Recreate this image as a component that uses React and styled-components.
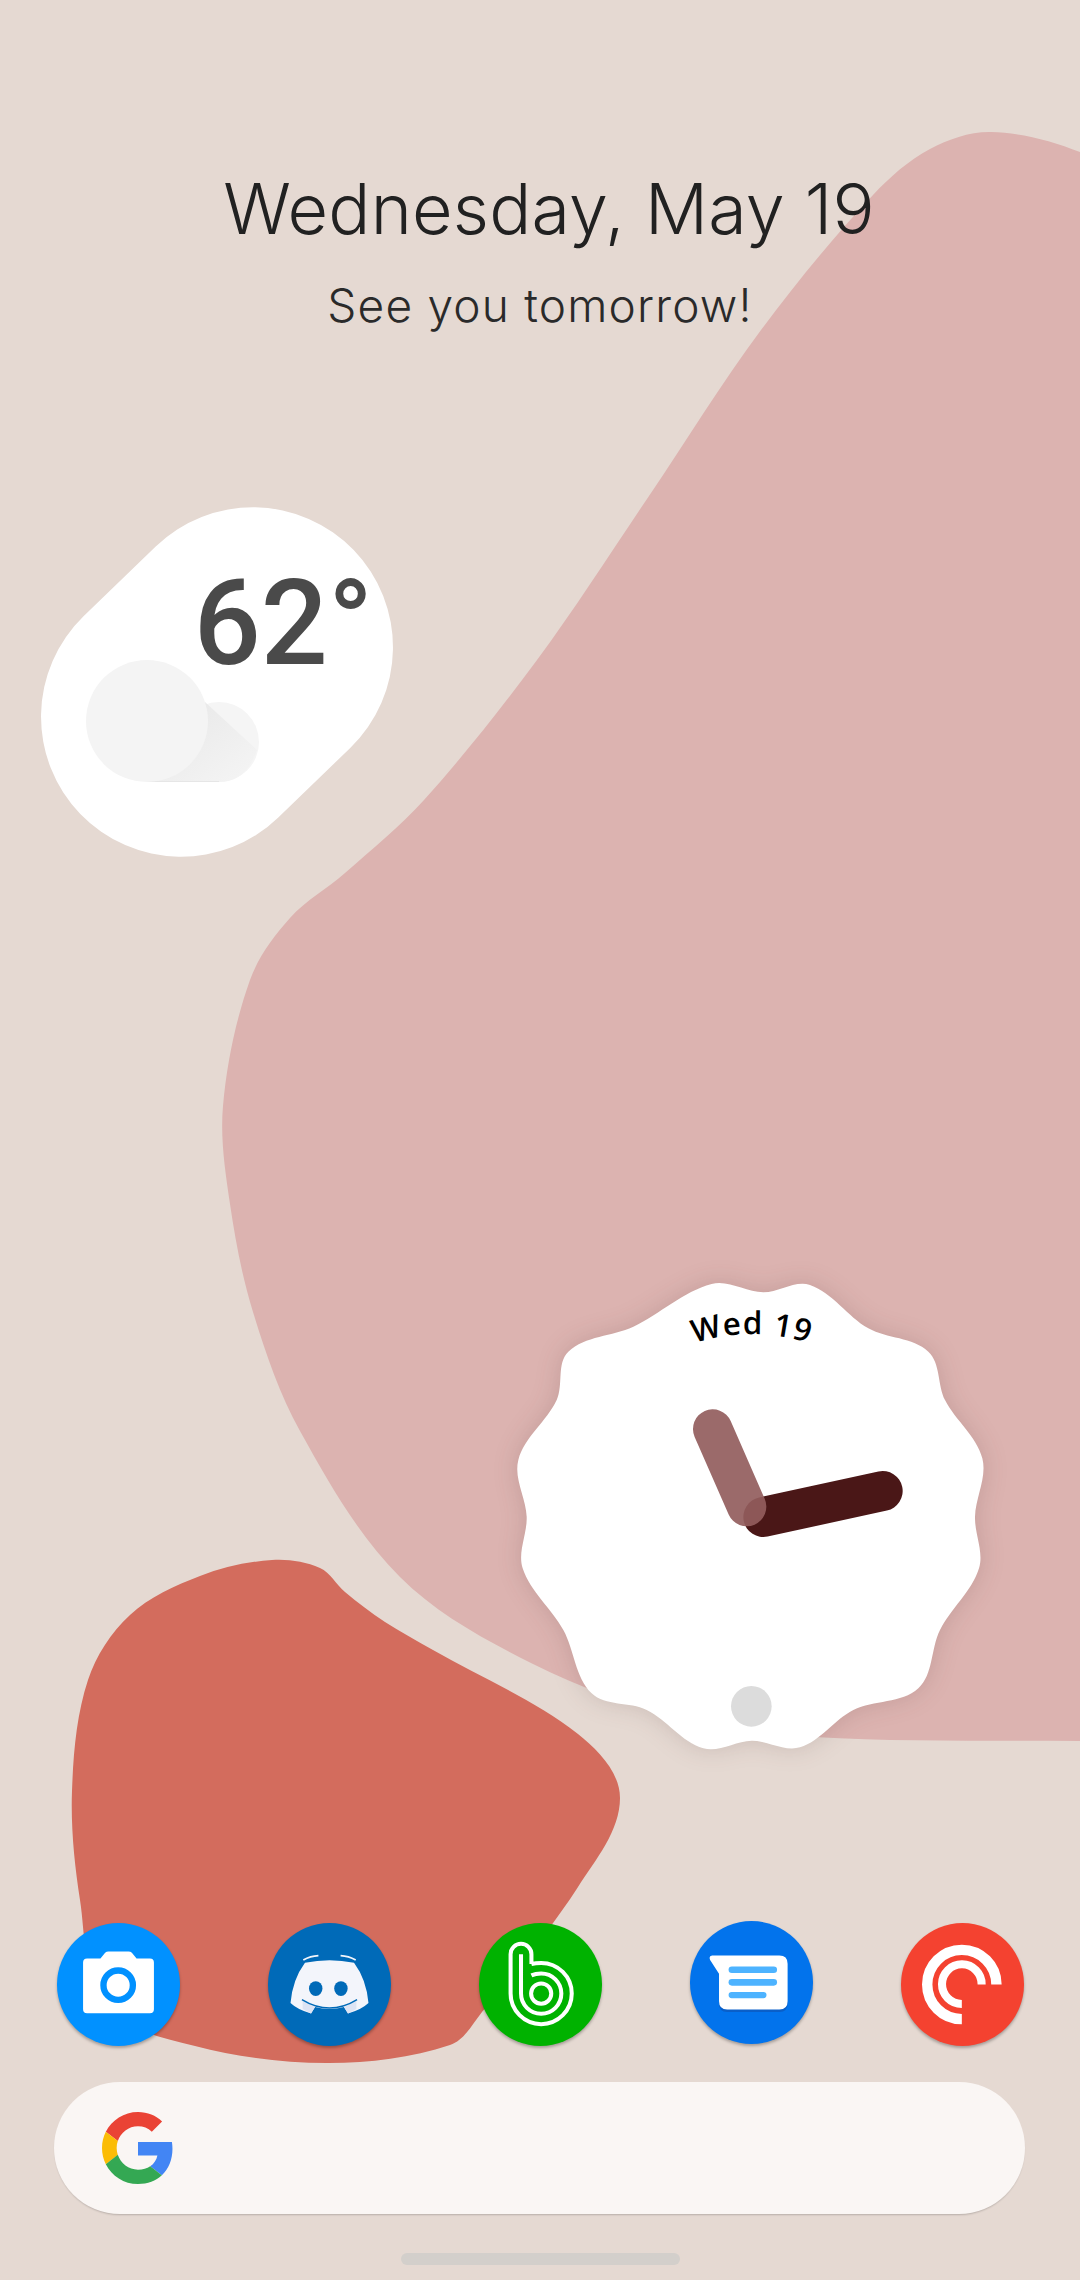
import React from 'react';
import styled, { createGlobalStyle } from 'styled-components';

const GlobalStyle = createGlobalStyle`
    html, body {
        margin: 0;
        padding: 0;
        background: #e5d9d2;
    }
`;

const Screen = styled.div`
    position: relative;
    overflow: hidden;
    display: flex;
    flex-direction: column;
    width: 1080px;
    height: 2280px;
    background: #e5d9d2;
    font-family: Inter, "Noto Sans", sans-serif;
`;

const Wallpaper = styled.svg`
    position: absolute;
    top: 0;
    left: 0;
    width: 1080px;
    height: 2280px;
`;

const Content = styled.div`
    position: relative;
    flex: 1;
    display: flex;
    flex-direction: column;
`;

const Header = styled.header`
    display: flex;
    flex-direction: column;
    align-items: center;
    height: 507px;
    padding-top: 167px;
    box-sizing: border-box;
    color: #212121;
`;

const DateLine = styled.h1`
    margin: 0;
    padding-left: 18px;
    font-size: 70px;
    font-weight: 350;
    letter-spacing: 0.2px;
    line-height: 84px;
`;

const Greeting = styled.p`
    margin: 26px 0 0;
    font-size: 46px;
    font-weight: 350;
    letter-spacing: 1.2px;
    line-height: 56px;
    color: #2a2a2a;
`;

const Weather = styled.section`
    position: relative;
    width: 352px;
    height: 350px;
    margin-left: 41px;

    &::before {
        content: '';
        position: absolute;
        top: 35px;
        left: -14px;
        width: 380px;
        height: 280px;
        border-radius: 140px;
        background: #fff;
        transform: rotate(-44deg);
    }
`;

const Temp = styled.div`
    position: relative;
    height: 153px;
    padding: 57px 20px 0 0;
    box-sizing: border-box;
    text-align: right;
    font-family: Roboto, sans-serif;
    font-size: 118px;
    font-weight: 500;
    line-height: 120px;
    color: #4a4a4a;
`;

const Cloud = styled.svg`
    position: relative;
    display: block;
    width: 174px;
    height: 122px;
    margin-left: 45px;
`;

const Clock = styled.svg`
    display: block;
    align-self: flex-end;
    width: 500px;
    height: 500px;
    margin: 403px 80px 0 0;
    overflow: visible;
`;

const ClockFace = styled.path`
    fill: #fff;
    filter: drop-shadow(0 0 36px rgba(70, 40, 40, 0.16));
`;

const ClockDate = styled.text`
    font-family: "Open Sans", sans-serif;
    font-size: 94px;
    font-weight: 600;
    letter-spacing: 3px;
    fill: #000;
`;

const Dock = styled.nav`
    display: flex;
    justify-content: space-between;
    align-items: center;
    margin-top: auto;
    padding: 0 56px 0 57px;
`;

const AppIcon = styled.div`
    width: 123px;
    height: 123px;
    border-radius: 50%;
    background: ${(p) => p.$bg};
    box-shadow: 0 2px 3px rgba(0, 0, 0, 0.28);
    transform: translateY(${(p) => p.$lift || 0}px);

    svg {
        display: block;
        width: 100%;
        height: 100%;
    }
`;

const SearchBar = styled.div`
    display: flex;
    align-items: center;
    height: 132px;
    margin: 36px 55px 0 54px;
    padding-left: 48px;
    border-radius: 66px;
    background: #faf6f4;
    box-shadow: 0 2px 2px -1px rgba(0, 0, 0, 0.2);

    svg {
        width: 72px;
        height: 72px;
    }
`;

const NavPill = styled.div`
    width: 279px;
    height: 12px;
    margin: 39px auto 15px;
    border-radius: 6px;
    background: #d3cfcb;
`;

// closed curve through the measured points, handles scaled by chord length so uneven spacing doesn't kink
const smooth = (pts) => {
    const n = pts.length;
    const tangent = (i) => {
        const a = pts[(i - 1 + n) % n];
        const b = pts[(i + 1) % n];
        const len = Math.hypot(b[0] - a[0], b[1] - a[1]);
        return [(b[0] - a[0]) / len, (b[1] - a[1]) / len];
    };
    let d = `M${pts[0][0]} ${pts[0][1]}`;
    for (let i = 0; i < n; i++) {
        const j = (i + 1) % n;
        const p1 = pts[i];
        const p2 = pts[j];
        const h = Math.hypot(p2[0] - p1[0], p2[1] - p1[1]) / 3;
        const t1 = tangent(i);
        const t2 = tangent(j);
        d += `C${p1[0] + t1[0] * h} ${p1[1] + t1[1] * h} ${p2[0] - t2[0] * h} ${p2[1] - t2[1] * h} ${p2[0]} ${p2[1]}`;
    }
    return d + 'Z';
};

const pinkBlob = smooth([
    [1240, 230], [1080, 152], [991, 132], [930, 149], [873, 195], [761, 330], [649, 496], [537, 660],
    [424, 800], [345, 873], [290, 918], [250, 980], [223, 1106], [230, 1204], [253, 1312], [300, 1431],
    [400, 1577], [533, 1664], [680, 1718], [814, 1737], [1080, 1741], [1240, 1741],
]);

const redBlob = smooth([
    [272, 1560], [320, 1568], [345, 1592], [385, 1622], [433, 1650], [578, 1734], [620, 1798], [578, 1887],
    [482, 2012], [450, 2045], [329, 2063], [195, 2046], [105, 2005], [80, 1900], [72, 1791],
    [88, 1680], [130, 1615], [200, 1576],
]);

const clockOutline = smooth([
    [635, 72], [790, 97], [930, 75], [1105, 205], [1285, 275], [1335, 420], [1447, 595], [1425, 770],
    [1437, 925], [1320, 1110], [1255, 1285], [1060, 1350], [900, 1462], [755, 1442], [610, 1465],
    [440, 1350], [275, 1300], [190, 1110], [68, 925], [80, 770], [55, 600], [170, 420], [205, 275], [400, 200],
]);

function CameraGlyph() {
    return (
        <svg viewBox="82 72 368 368">
            <path
                fill="#fff"
                d="M172 178H212L226 161Q230 157 236 157H296Q302 157 306 161L320 178H360Q372 178 372 190V330Q372 342 360 342H172Q160 342 160 330V190Q160 178 172 178Z"
            />
            <circle cx="265" cy="258" r="44" fill="none" stroke="#0191ff" strokeWidth="19" />
        </svg>
    );
}

function DiscordGlyph() {
    return (
        <svg viewBox="12 12 366 366">
            <path
                fill="#f3f5fb"
                d="M122 130Q195 115 268 130Q305 180 311 250Q290 270 250 281L238 262Q195 274 152 262L140 281Q100 270 79 250Q85 180 122 130Z"
            />
            <path fill="#dde4f4" d="M115 240Q128 252 152 262L140 281L115 268ZM275 240Q262 252 238 262L250 281L275 268Z" />
            <path fill="none" stroke="#006ab8" strokeWidth="4" d="M113 240Q195 290 277 240" />
            <path fill="none" stroke="#f3f5fb" strokeWidth="5" d="M117 122Q138 110 162 109M228 109Q252 110 273 122" />
            <ellipse cx="154" cy="207" rx="20" ry="22" fill="#006ab8" />
            <ellipse cx="229" cy="207" rx="20" ry="22" fill="#006ab8" />
        </svg>
    );
}

function BandGlyph() {
    return (
        <svg viewBox="12 12 366 366">
            <g fill="none" stroke="#fff" strokeWidth="12">
                <path d="M168 134V105A31 31 0 0 0 106 105V222A91 91 0 1 0 197 131Q180 131 168 134" />
                <path d="M137 105V222A60 60 0 1 0 197 162Q180 162 168 168" />
                <circle cx="197" cy="222" r="30" />
            </g>
        </svg>
    );
}

function MessagesGlyph() {
    return (
        <svg viewBox="449 62 373 373">
            <path
                fill="#0a5fc8"
                d="M562 338H720Q745 338 745 313V300H537V313Q537 338 562 338Z"
            />
            <path
                fill="#fff"
                d="M516 167H720Q745 167 745 192V305Q745 330 720 330H562Q537 330 537 305V222L510 180Q505 168 516 167Z"
            />
            <g fill="#4db3ff">
                <rect x="566" y="200" width="147" height="20" rx="10" />
                <rect x="566" y="238" width="147" height="20" rx="10" />
                <rect x="566" y="277" width="115" height="19" rx="9.5" />
            </g>
        </svg>
    );
}

function PocketGlyph() {
    return (
        <svg viewBox="12 12 366 366">
            <g fill="none" stroke="#fff">
                <path strokeWidth="31" d="M296 195A103 103 0 1 0 193 298" />
                <path strokeWidth="24" d="M252 195A59 59 0 1 0 193 253" />
            </g>
        </svg>
    );
}

function App() {
    return (
        <Screen>
            <GlobalStyle />
            <Wallpaper viewBox="0 0 1080 2280">
                <path d={pinkBlob} fill="#dcb3b0" />
                <path d={redBlob} fill="#d36c5d" />
            </Wallpaper>
            <Content>
                <Header>
                    <DateLine>Wednesday, May 19</DateLine>
                    <Greeting>See you tomorrow!</Greeting>
                </Header>

                <Weather>
                    <Temp>62°</Temp>
                    <Cloud viewBox="0 0 174 122">
                        <defs>
                            <linearGradient id="cloudShade" x1="0" y1="0" x2="1" y2="1">
                                <stop offset="0" stopColor="#e6e6e6" />
                                <stop offset="1" stopColor="#f5f5f5" />
                            </linearGradient>
                        </defs>
                        <circle cx="133" cy="82" r="40" fill="#f5f5f5" />
                        <path d="M61 122H133Q160 122 171 90L119 42Z" fill="url(#cloudShade)" />
                        <path d="M61 121.5H133" stroke="#e6e6e6" strokeWidth="1" />
                        <circle cx="61" cy="61" r="61" fill="#f4f4f4" />
                    </Cloud>
                </Weather>

                <Clock viewBox="0 0 1500 1500">
                    <ClockFace d={clockOutline} />
                    <path id="dateArc" d="M210 767A545 545 0 0 1 1300 767" fill="none" />
                    <ClockDate textAnchor="middle">
                        <textPath href="#dateArc" startOffset="50%">Wed 19</textPath>
                    </ClockDate>
                    <line x1="790" y1="771" x2="1148" y2="693" stroke="#4a1717" strokeWidth="120" strokeLinecap="round" />
                    <line x1="740" y1="740" x2="638" y2="507" stroke="#925d5d" strokeOpacity="0.92" strokeWidth="118" strokeLinecap="round" />
                    <circle cx="754" cy="1339" r="61" fill="#dcdcdc" />
                </Clock>

                <Dock>
                    <AppIcon $bg="#0191ff"><CameraGlyph /></AppIcon>
                    <AppIcon $bg="#006ab8"><DiscordGlyph /></AppIcon>
                    <AppIcon $bg="#00b200"><BandGlyph /></AppIcon>
                    <AppIcon $bg="#0273ec" $lift={-2}><MessagesGlyph /></AppIcon>
                    <AppIcon $bg="#f44230"><PocketGlyph /></AppIcon>
                </Dock>

                <SearchBar>
                    <svg viewBox="0 0 48 48">
                        <path fill="#EA4335" d="M24 9.5c3.54 0 6.71 1.22 9.21 3.6l6.85-6.85C35.9 2.38 30.47 0 24 0 14.62 0 6.51 5.38 2.56 13.22l7.98 6.19C12.43 13.72 17.74 9.5 24 9.5z" />
                        <path fill="#4285F4" d="M46.98 24.55c0-1.57-.15-3.09-.38-4.55H24v9.02h12.94c-.58 2.96-2.26 5.48-4.78 7.18l7.73 6c4.51-4.18 7.09-10.36 7.09-17.65z" />
                        <path fill="#FBBC05" d="M10.53 28.59c-.48-1.45-.76-2.99-.76-4.59s.27-3.14.76-4.59l-7.98-6.19C.92 16.46 0 20.12 0 24c0 3.88.92 7.54 2.56 10.78l7.97-6.19z" />
                        <path fill="#34A853" d="M24 48c6.48 0 11.93-2.13 15.89-5.81l-7.73-6c-2.15 1.45-4.92 2.3-8.16 2.3-6.26 0-11.57-4.22-13.47-9.91l-7.98 6.19C6.51 42.62 14.62 48 24 48z" />
                    </svg>
                </SearchBar>
                <NavPill />
            </Content>
        </Screen>
    );
}

export default App;
